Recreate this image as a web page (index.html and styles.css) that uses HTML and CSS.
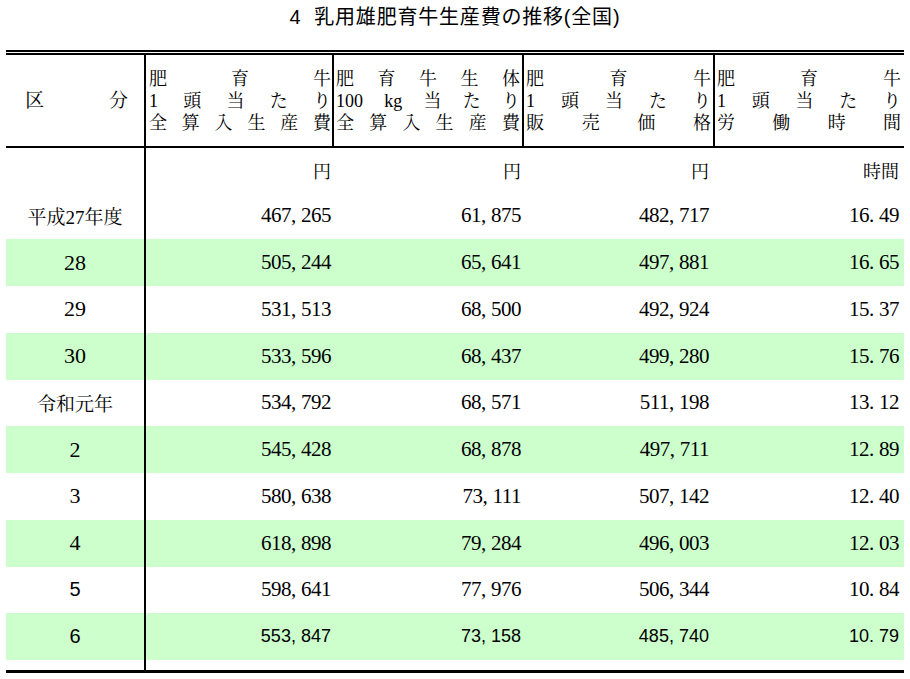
FILE: index.html
```html
<!DOCTYPE html>
<html lang="ja">
<head>
<meta charset="utf-8">
<title>乳用雄肥育牛生産費の推移</title>
<link rel="stylesheet" href="styles.css">
</head>
<body>
<div class="title">4&nbsp;&nbsp;乳用雄肥育牛生産費の推移(全国)</div>
<div class="tbl">
  <div class="thead">
    <div class="hc kubun"><span>区</span><span>分</span></div>
    <div class="hc">
      <div class="l"><span>肥</span><span>育</span><span>牛</span></div>
      <div class="l"><span>1</span><span>頭</span><span>当</span><span>た</span><span>り</span></div>
      <div class="l"><span>全</span><span>算</span><span>入</span><span>生</span><span>産</span><span>費</span></div>
    </div>
    <div class="hc">
      <div class="l"><span>肥</span><span>育</span><span>牛</span><span>生</span><span>体</span></div>
      <div class="l"><span>100</span><span>kg</span><span>当</span><span>た</span><span>り</span></div>
      <div class="l"><span>全</span><span>算</span><span>入</span><span>生</span><span>産</span><span>費</span></div>
    </div>
    <div class="hc">
      <div class="l"><span>肥</span><span>育</span><span>牛</span></div>
      <div class="l"><span>1</span><span>頭</span><span>当</span><span>た</span><span>り</span></div>
      <div class="l"><span>販</span><span>売</span><span>価</span><span>格</span></div>
    </div>
    <div class="hc">
      <div class="l"><span>肥</span><span>育</span><span>牛</span></div>
      <div class="l"><span>1</span><span>頭</span><span>当</span><span>た</span><span>り</span></div>
      <div class="l"><span>労</span><span>働</span><span>時</span><span>間</span></div>
    </div>
  </div>

  <div class="row unit">
    <div class="lbl"></div>
    <div class="num cjk">円</div>
    <div class="num cjk">円</div>
    <div class="num cjk">円</div>
    <div class="num cjk">時間</div>
  </div>
  <div class="row">
    <div class="lbl">平成27年度</div>
    <div class="num">467<i>,</i>265</div>
    <div class="num">61<i>,</i>875</div>
    <div class="num">482<i>,</i>717</div>
    <div class="num">16<i>.</i>49</div>
  </div>
  <div class="row g">
    <div class="lbl yr">28</div>
    <div class="num">505<i>,</i>244</div>
    <div class="num">65<i>,</i>641</div>
    <div class="num">497<i>,</i>881</div>
    <div class="num">16<i>.</i>65</div>
  </div>
  <div class="row">
    <div class="lbl yr">29</div>
    <div class="num">531<i>,</i>513</div>
    <div class="num">68<i>,</i>500</div>
    <div class="num">492<i>,</i>924</div>
    <div class="num">15<i>.</i>37</div>
  </div>
  <div class="row g">
    <div class="lbl yr">30</div>
    <div class="num">533<i>,</i>596</div>
    <div class="num">68<i>,</i>437</div>
    <div class="num">499<i>,</i>280</div>
    <div class="num">15<i>.</i>76</div>
  </div>
  <div class="row">
    <div class="lbl">令和元年</div>
    <div class="num">534<i>,</i>792</div>
    <div class="num">68<i>,</i>571</div>
    <div class="num">511<i>,</i>198</div>
    <div class="num">13<i>.</i>12</div>
  </div>
  <div class="row g">
    <div class="lbl yr">2</div>
    <div class="num">545<i>,</i>428</div>
    <div class="num">68<i>,</i>878</div>
    <div class="num">497<i>,</i>711</div>
    <div class="num">12<i>.</i>89</div>
  </div>
  <div class="row">
    <div class="lbl yr">3</div>
    <div class="num">580<i>,</i>638</div>
    <div class="num">73<i>,</i>111</div>
    <div class="num">507<i>,</i>142</div>
    <div class="num">12<i>.</i>40</div>
  </div>
  <div class="row g">
    <div class="lbl yr">4</div>
    <div class="num">618<i>,</i>898</div>
    <div class="num">79<i>,</i>284</div>
    <div class="num">496<i>,</i>003</div>
    <div class="num">12<i>.</i>03</div>
  </div>
  <div class="row">
    <div class="lbl sans">5</div>
    <div class="num">598<i>,</i>641</div>
    <div class="num">77<i>,</i>976</div>
    <div class="num">506<i>,</i>344</div>
    <div class="num">10<i>.</i>84</div>
  </div>
  <div class="row g sansrow">
    <div class="lbl sans">6</div>
    <div class="num">553<i>,</i>847</div>
    <div class="num">73<i>,</i>158</div>
    <div class="num">485<i>,</i>740</div>
    <div class="num">10<i>.</i>79</div>
  </div>
  <div class="row tail">
    <div class="lbl"></div>
    <div></div><div></div><div></div><div></div>
  </div>
</div>
</body>
</html>
```

FILE: styles.css
```css
:root {
  --serif: "Liberation Serif", "Noto Serif CJK JP", "Noto Sans CJK JP", serif;
  --sans: "Liberation Sans", "Noto Sans CJK JP", sans-serif;
  --cols: 140px 188px 190px 191px 189px;
}

* { box-sizing: border-box; }

body {
  margin: 0;
  background: #fff;
  color: #000;
  font-family: var(--serif);
}

.title {
  height: 50px;
  padding-top: 6px;
  text-align: center;
  font-family: var(--sans);
  font-size: 20px;
  line-height: 22px;
  letter-spacing: 0.8px;
}

.tbl {
  margin-left: 6px;
  width: 898px;
  border-top: 2px solid #000;
  padding-top: 1px;
  border-bottom: 3px solid #000;
}

.thead {
  display: grid;
  grid-template-columns: var(--cols);
  box-sizing: content-box;
  height: 91px;
  border-top: 2px solid #000;
  border-bottom: 2px solid #000;
}

.hc {
  display: flex;
  flex-direction: column;
  justify-content: center;
  border-right: 2px solid #000;
  padding: 0 2px 0 2px;
  font-size: 18px;
  line-height: 22px;
}
.hc:nth-child(2) { padding-left: 3px; padding-right: 1px; }
.hc:last-child { border-right: 0; padding-right: 3px; }

.hc .l {
  display: flex;
  justify-content: space-between;
}

.hc.kubun {
  flex-direction: row;
  align-items: center;
  justify-content: space-between;
  padding: 0 16px 0 19px;
  font-size: 19px;
}

.row {
  display: grid;
  grid-template-columns: var(--cols);
  height: 46.75px;
}
.row.unit { height: 44.5px; }
.row.tail { height: 10px; }
.row.g { background: #ccffcc; }

.row > div {
  display: flex;
  align-items: center;
}

.lbl {
  justify-content: center;
  border-right: 2px solid #000;
  font-size: 19px;
}
.lbl.yr { font-size: 22px; }
.lbl.sans { font-family: var(--sans); font-size: 20px; }

.num {
  justify-content: flex-end;
  font-size: 21px;
  letter-spacing: -0.5px;
}
.num.cjk { font-size: 18px; letter-spacing: 0; }
.num i { font-style: normal; margin-right: 0.25em; }

.row > .num:nth-child(2) { padding-right: 3px; }
.row > .num:nth-child(3) { padding-right: 3px; }
.row > .num:nth-child(4) { padding-right: 6px; }
.row > .num:nth-child(5) { padding-right: 5px; }

.sansrow .num { font-family: var(--sans); font-size: 18px; letter-spacing: 0; }
.sansrow .num i { margin-right: 0.28em; }
```
